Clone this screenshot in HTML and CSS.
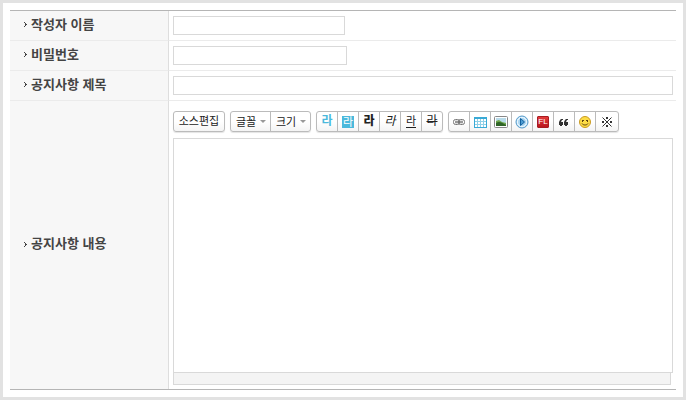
FILE: index.html
```html
<!DOCTYPE html>
<html lang="ko">
<head>
<meta charset="utf-8">
<title>공지사항</title>
<link rel="stylesheet" href="styles.css">
</head>
<body>
<form class="frame">
  <table class="form">
    <tr>
      <th scope="row"><label class="name" for="writer"><svg class="mark" viewBox="0 0 3 5"><path d="M0 0h1v1h1v1h1v1H2v1H1v1H0V4h1V1H0z"/></svg>작성자 이름</label></th>
      <td><input class="field writer" id="writer" type="text"></td>
    </tr>
    <tr>
      <th scope="row"><label class="name" for="password"><svg class="mark" viewBox="0 0 3 5"><path d="M0 0h1v1h1v1h1v1H2v1H1v1H0V4h1V1H0z"/></svg>비밀번호</label></th>
      <td><input class="field password" id="password" type="password"></td>
    </tr>
    <tr>
      <th scope="row"><label class="name" for="subject"><svg class="mark" viewBox="0 0 3 5"><path d="M0 0h1v1h1v1h1v1H2v1H1v1H0V4h1V1H0z"/></svg>공지사항 제목</label></th>
      <td><input class="field" id="subject" type="text"></td>
    </tr>
    <tr>
      <th scope="row"><label class="name" for="content"><svg class="mark" viewBox="0 0 3 5"><path d="M0 0h1v1h1v1h1v1H2v1H1v1H0V4h1V1H0z"/></svg>공지사항 내용</label></th>
      <td class="editor-cell">
        <div class="toolbar">
          <div class="group"><button class="source" type="button">소스편집</button></div>
          <div class="group">
            <div class="drop"><select aria-label="글꼴"><option>글꼴</option></select></div>
            <div class="drop"><select aria-label="크기"><option>크기</option></select></div>
          </div>
          <div class="group">
            <button class="tool color" type="button" aria-label="글자색">라</button>
            <button class="tool" type="button" aria-label="배경색"><span class="highlight">라</span></button>
            <button class="tool bold" type="button" aria-label="굵게">라</button>
            <button class="tool italic" type="button" aria-label="기울임">라</button>
            <button class="tool" type="button" aria-label="밑줄"><span class="underline">라</span></button>
            <button class="tool strike" type="button" aria-label="취소선">라</button>
          </div>
          <div class="group inserts">
            <button class="tool" type="button" aria-label="링크"><svg class="icon" viewBox="0 0 14 14"><g fill="none"><rect x="1.500" y="4.500" width="6" height="5" rx="2" stroke="#777"/><rect x="6.500" y="4.500" width="6" height="5" rx="2" stroke="#777"/><path stroke="#bbb" d="M3 6h3M8 6h3M3 8h3M8 8h3"/><path stroke="#555" d="M3 7h8"/></g></svg></button>
            <button class="tool" type="button" aria-label="표"><svg class="icon" viewBox="0 0 14 14" shape-rendering="crispEdges"><path fill="#8fd0e8" d="M1 2h13v11H1z"/><path fill="#fff" d="M2 4h2v2H2zM5 4h2v2H5zM8 4h2v2H8zM11 4h2v2h-2zM2 7h2v2H2zM5 7h2v2H5zM8 7h2v2H8zM11 7h2v2h-2zM2 10h2v2H2zM5 10h2v2H5zM8 10h2v2H8zM11 10h2v2h-2z"/><path fill="none" stroke="#3aaad6" d="M1.500 2.500h12v10h-12z"/><path fill="#3aaad6" d="M1 2h13v2H1z"/></svg></button>
            <button class="tool" type="button" aria-label="사진"><svg class="icon" viewBox="0 0 14 14"><rect x=".5" y="1.500" width="13" height="11" rx="1" fill="#fff" stroke="#888"/><path fill="#b8dbea" d="M2 3h10v8H2z"/><path fill="#6fa64a" d="M2 6l3-1 3 2 4 1v3H2z"/><path fill="#2f6528" d="M2 8c3-2 5-1 10 2v1H2z"/></svg></button>
            <button class="tool" type="button" aria-label="동영상"><svg class="icon" viewBox="0 0 14 14"><circle cx="7" cy="7" r="6" fill="#d3eaf8" stroke="#5097c9"/><circle cx="7" cy="7" r="4.500" fill="#a9d4f0" stroke="#edf8ff"/><path fill="#4a9bd3" stroke="#12619e" d="M5.500 3.500L9.500 7l-4 3.500z"/></svg></button>
            <button class="tool" type="button" aria-label="플래시"><span class="flash">FL</span></button>
            <button class="tool" type="button" aria-label="인용구"><svg class="icon" viewBox="0 0 14 14"><path fill="#333" d="M6 4v1H5L4 7h2v3H5v1H3v-1H2V7l1-2 1-1zM11 4v1h-1L9 7h2v3h-1v1H8v-1H7V7l1-2 1-1z"/></svg></button>
            <button class="tool" type="button" aria-label="이모티콘"><svg class="icon" viewBox="0 0 14 14"><circle cx="7" cy="7" r="5.500" fill="#fddc45" stroke="#c99a22"/><path fill="#614510" d="M4 5h2v1H5v1H4zM8 5h2v2H9V6H8z"/><path fill="none" stroke="#614510" d="M4 8.500c1 2 5 2 6 0"/></svg></button>
            <button class="tool" type="button" aria-label="특수문자"><svg class="icon" viewBox="0 0 14 14"><path stroke="#333" d="M2.500 2.500l9 9M11.500 2.500l-9 9"/><path fill="#333" d="M6 2h2v2H6zM6 10h2v2H6zM2 6h2v2H2zM10 6h2v2h-2z"/></svg></button>
          </div>
        </div>
        <textarea class="content" id="content"></textarea>
        <div class="resize"></div>
      </td>
    </tr>
  </table>
</form>
</body>
</html>
```
FILE: styles.css
```css
* {
  box-sizing: border-box;
}

body {
  margin: 0;
  color: #444;
  font-family: "Liberation Sans", "Noto Sans CJK KR", sans-serif;
}

.frame {
  min-height: 100vh;
  padding: 7px;
  border: 3px solid #e2e2e2;
  background: #fff;
}

.form {
  width: 100%;
  border-top: 1px solid #b5b5b5;
  border-bottom: 1px solid #b5b5b5;
  border-spacing: 0;
}

th,
td {
  padding: 5px 3px 5px 4px;
  border-bottom: 1px solid #ebebeb;
}

th {
  width: 159px;
  padding: 0 0 2px 14px;
  border-right: 1px solid #dedede;
  background: #f7f7f7;
  text-align: left;
}

tr:last-child > * {
  border-bottom: 0;
}

.name {
  display: flex;
  align-items: center;
  gap: 4px;
  font-size: 13px;
  font-weight: 700;
  line-height: 20px;
}

.mark {
  width: 3px;
  height: 5px;
  fill: #444;
  shape-rendering: crispEdges;
}

.field {
  display: block;
  width: 100%;
  height: 19px;
  padding: 0 3px;
  border: 1px solid #d9d9d9;
  border-radius: 0;
  background: #fff;
  font: inherit;
  font-size: 12px;
}

.writer {
  width: 172px;
}

.password {
  width: 174px;
}

td.editor-cell {
  padding-top: 10px;
  padding-bottom: 4px;
}

.toolbar {
  display: flex;
  gap: 5px;
  margin-bottom: 6px;
}

.group {
  display: flex;
  height: 21px;
  overflow: hidden;
  border: 1px solid #bbb;
  border-radius: 3px;
  background: linear-gradient(#fff 50%, #f4f4f4);
  box-shadow: 0 1px 1px #e4e4e4;
}

.group > * + * {
  border-left: 1px solid #bbb;
}

button,
select {
  margin: 0;
  padding: 0;
  border: 0;
  background: none;
  color: #222;
  font: inherit;
  font-size: 11px;
  line-height: 19px;
}

.source {
  width: 50px;
}

.drop {
  position: relative;
  width: 40px;
}

.drop:first-child {
  width: 39px;
}

.drop::after {
  position: absolute;
  top: 8px;
  right: 4px;
  border: 3px solid transparent;
  border-top-color: #999;
  border-bottom: 0;
  content: "";
  pointer-events: none;
}

select {
  width: 100%;
  height: 19px;
  padding-left: 5px;
  appearance: none;
}

.tool {
  display: flex;
  align-items: center;
  justify-content: center;
  width: 21px;
  height: 19px;
  font-size: 12px;
}

.tool:first-child {
  width: 20px;
}

.inserts .tool:last-child {
  width: 23px;
}

.color {
  color: #4bb9dc;
  font-weight: 700;
}

.highlight {
  width: 12px;
  height: 12px;
  background: #4bb9dc;
  color: #fff;
  font-size: 11px;
  line-height: 12px;
}

.bold {
  font-weight: 900;
}

.italic {
  font-style: italic;
}

.underline {
  height: 12px;
  border-bottom: 1px solid #222;
  font-size: 11px;
  line-height: 11px;
}

.strike {
  text-decoration: line-through;
}

.icon {
  width: 14px;
  height: 14px;
}

.flash {
  width: 12px;
  height: 12px;
  border: 1px solid #a81c20;
  border-radius: 1px;
  background: linear-gradient(#e33b3b, #b9171d);
  color: #fff;
  font-size: 8px;
  line-height: 10px;
}

.content {
  display: block;
  width: 100%;
  height: 235px;
  padding: 4px;
  border: 1px solid #d9d9d9;
  border-radius: 0;
  background: #fff;
  font: inherit;
  font-size: 12px;
  resize: none;
}

.resize {
  height: 12px;
  margin-right: 2px;
  border: 1px solid #d9d9d9;
  border-top: 0;
  background: #f4f4f4;
}
```
